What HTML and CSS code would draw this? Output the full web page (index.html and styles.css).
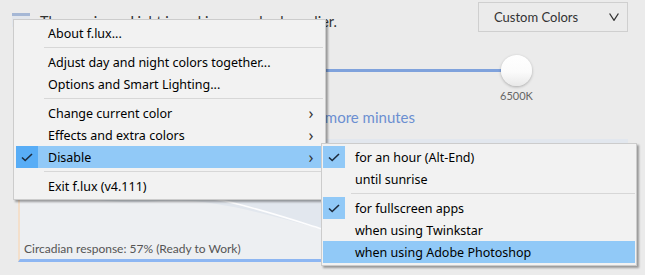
FILE: index.html
```html
<!doctype html>
<html lang="en">
<head>
    <meta charset="UTF-8">
    <title>f.lux</title>
    <link rel="stylesheet" href="styles.css">
</head>
<body>
<div class="app">
    <div class="header">
        <div class="icon"></div>
        <div class="headline">The sun is up. Light is making your body earlier.</div>
        <div class="dropdown">
            <span>Custom Colors</span>
            <svg class="chevron" width="10" height="8" viewBox="0 0 10 8"><polyline points="0.6,0.5 5,7.3 9.4,0.5" fill="none" stroke="#333" stroke-width="1.3"/></svg>
        </div>
    </div>

    <div class="slider">
        <div class="track"></div>
        <div class="knob-col">
            <div class="knob"></div>
            <div class="knob-label">6500K</div>
        </div>
    </div>

    <div class="status">Disabled for 60 more minutes</div>

    <div class="chart">
        <svg class="chart-bg" viewBox="0 0 608 120" preserveAspectRatio="none">
            <rect x="0" y="0" width="608" height="120" fill="#edeff2"/>
            <path d="M0,0 L0,44 C50,60 100,66 140,62 C190,58 240,74 302,90 L608,120 L608,0 Z" fill="#e2e7ee"/>
            <path d="M130,60 C160,58 185,58 205,62 C240,70 270,80 302,90" fill="none" stroke="#fdfdfe" stroke-width="1.6"/>
        </svg>
        <div class="chart-text">Circadian response: 57% (Ready to Work)</div>
    </div>
</div>

<!-- 主菜单 -->
<div class="menu main-menu">
    <div class="item"><span class="check"></span><span class="label">About f.lux...</span><span class="arrow"></span></div>
    <div class="sep"></div>
    <div class="item"><span class="check"></span><span class="label">Adjust day and night colors together...</span><span class="arrow"></span></div>
    <div class="item"><span class="check"></span><span class="label">Options and Smart Lighting...</span><span class="arrow"></span></div>
    <div class="sep"></div>
    <div class="item"><span class="check"></span><span class="label">Change current color</span><span class="arrow">&rsaquo;</span></div>
    <div class="item"><span class="check"></span><span class="label">Effects and extra colors</span><span class="arrow">&rsaquo;</span></div>
    <div class="item hover checked"><span class="check"><svg width="12" height="9" viewBox="0 0 12 9"><polyline points="1,4.5 4.2,7.5 11,1" fill="none" stroke="#1c2b3d" stroke-width="1.6"/></svg></span><span class="label">Disable</span><span class="arrow">&rsaquo;</span></div>
    <div class="sep"></div>
    <div class="item"><span class="check"></span><span class="label">Exit f.lux (v4.111)</span><span class="arrow"></span></div>
</div>

<!-- 子菜单 -->
<div class="menu sub-menu">
    <div class="item checked"><span class="check"><svg width="12" height="9" viewBox="0 0 12 9"><polyline points="1,4.5 4.2,7.5 11,1" fill="none" stroke="#1c2b3d" stroke-width="1.6"/></svg></span><span class="label">for an hour (Alt-End)</span></div>
    <div class="item"><span class="check"></span><span class="label">until sunrise</span></div>
    <div class="sep"></div>
    <div class="item checked"><span class="check"><svg width="12" height="9" viewBox="0 0 12 9"><polyline points="1,4.5 4.2,7.5 11,1" fill="none" stroke="#1c2b3d" stroke-width="1.6"/></svg></span><span class="label">for fullscreen apps</span></div>
    <div class="item"><span class="check"></span><span class="label">when using Twinkstar</span></div>
    <div class="item hover"><span class="check"></span><span class="label">when using Adobe Photoshop</span></div>
</div>
</body>
</html>
```

FILE: styles.css
```css
*{
    box-sizing: border-box;
}
body{
    margin: 0;
    width: 645px;
    height: 275px;
    overflow: hidden;
    background: #ebebeb;
    font-family: Lato, "Open Sans", sans-serif;
    position: relative;
}
.app{
    padding: 2px 17px 0 12px;
}

/* 顶部 */
.header{
    display: flex;
    align-items: flex-start;
    height: 30px;
}
.icon{
    width: 18px;
    height: 14px;
    margin-top: 11px;
    border-top: 3px solid #a5b7d5;
    background: #e2e6ec;
}
.headline{
    margin: 10px 0 0 10px;
    font-size: 14.4px;
    line-height: 20px;
    color: #333;
}
.dropdown{
    margin-left: auto;
    width: 150px;
    height: 30px;
    border: 1px solid #cfcfcf;
    display: flex;
    align-items: center;
    justify-content: space-between;
    padding: 0 8px 1px 15px;
    font-size: 13px;
    color: #333;
}

/* 滑块 */
.slider{
    display: flex;
    align-items: flex-start;
    width: 492px;
    margin: 23px 0 0 28px;
}
.track{
    flex: 1;
    height: 3px;
    margin-top: 14px;
    background: #7fa2dc;
}
.knob-col{
    width: 31px;
    display: flex;
    flex-direction: column;
    align-items: center;
}
.knob{
    width: 31px;
    height: 31px;
    border-radius: 50%;
    background: linear-gradient(#ffffff, #fbfbfb 55%, #e9e9e9);
    box-shadow: 0 1px 3px rgba(0,0,0,0.28);
}
.knob-label{
    margin-top: 3px;
    font-size: 11px;
    line-height: 14px;
    color: #666;
    white-space: nowrap;
}
.status{
    width: 403px;
    margin-top: 4px;
    text-align: right;
    font-size: 15px;
    line-height: 20px;
    color: #6b8fd1;
}

/* 图表 */
.chart{
    position: relative;
    margin: 12px 0 0 6px;
    height: 123px;
    border-left: 2px solid #f3dfcb;
    border-bottom: 3px solid #8db6f2;
    display: flex;
    flex-direction: column;
    justify-content: flex-end;
    padding: 0 0 2px 4px;
}
.chart-bg{
    position: absolute;
    left: 0;
    top: 0;
    width: 100%;
    height: 100%;
}
.chart-text{
    position: relative;
    font-size: 12px;
    line-height: 16px;
    color: #555;
}

/* 菜单 */
.menu{
    position: absolute;
    background: #f2f2f2;
    border: 1px solid #cccccc;
    padding: 2px;
    font-family: "Noto Sans", "Open Sans", sans-serif;
    font-size: 12.5px;
    color: #000;
    box-shadow: 2px 2px 2px rgba(0,0,0,0.35);
}
.main-menu{
    left: 13px;
    top: 19px;
    width: 313px;
}
.sub-menu{
    left: 321px;
    top: 143px;
    width: 316px;
    padding: 2px 1px;
}
.item{
    display: grid;
    grid-template-columns: 22px 1fr 24px;
    align-items: center;
    height: 22px;
}
.check{
    height: 22px;
    display: flex;
    align-items: center;
    justify-content: center;
}
.label{
    padding-left: 10px;
    white-space: nowrap;
}
.arrow{
    text-align: center;
    font-size: 16px;
    line-height: 22px;
    color: #333;
}
.item.checked .check{
    background: #91c9f7;
}
.item.hover{
    background: #91c9f7;
}
.item.hover.checked .check{
    background: #58adf6;
}
.sep{
    height: 7px;
    padding-top: 3px;
    margin-left: 28px;
}
.sep::after{
    content: "";
    display: block;
    height: 1px;
    background: #d7d7d7;
}
```
